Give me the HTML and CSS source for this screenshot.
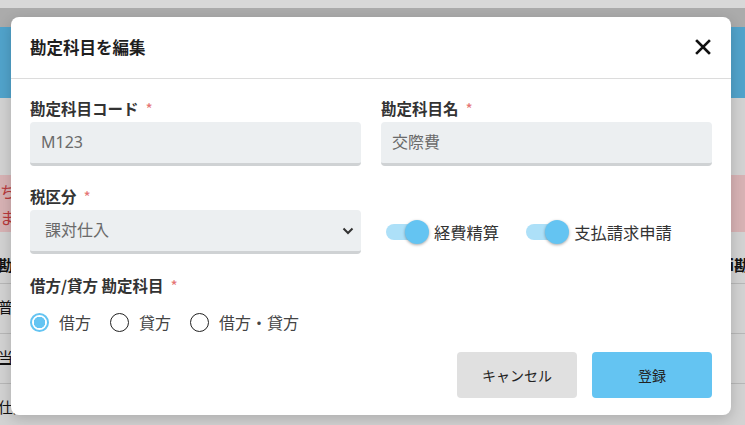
FILE: index.html
```html
<!DOCTYPE html>
<html lang="ja">
<head>
<meta charset="utf-8">
<link rel="stylesheet" href="styles.css">
</head>
<body>
<div class="page">
  <div class="topstrip"></div>
  <div class="appbar"></div>
  <div class="blueband"></div>
  <div class="content">
    <div class="alert"><div>ちょっと</div><div>まだ</div></div>
    <div class="thead"><span class="lt">勘定</span><span class="rt">i勘定</span></div>
    <div class="trow"><span class="lt">普通</span></div>
    <div class="trow"><span class="lt ul">当座</span></div>
    <div class="trow"><span class="lt">仕入</span></div>
  </div>
</div>

<div class="modal">
  <div class="modal-header">
    <h2 class="title">勘定科目を編集</h2>
    <svg class="close" width="16" height="16" viewBox="0 0 16 16"><path d="M2 2 L14 14 M14 2 L2 14" stroke="#111" stroke-width="2.6" stroke-linecap="square"/></svg>
  </div>
  <div class="modal-body">
    <div class="grid">
      <div class="field">
        <div class="label">勘定科目コード<span class="req">*</span></div>
        <div class="input">M123</div>
      </div>
      <div class="field">
        <div class="label">勘定科目名<span class="req">*</span></div>
        <div class="input">交際費</div>
      </div>
      <div class="field row2">
        <div class="label">税区分<span class="req">*</span></div>
        <div class="input select"><span>課対仕入</span>
          <svg width="12" height="8" viewBox="0 0 12 8"><path d="M1.5 1.5 L6 6 L10.5 1.5" fill="none" stroke="#333" stroke-width="2"/></svg>
        </div>
      </div>
      <div class="toggles">
        <div class="toggle"><span class="track"><span class="thumb"></span></span><span class="tlabel">経費精算</span></div>
        <div class="toggle"><span class="track"><span class="thumb"></span></span><span class="tlabel">支払請求申請</span></div>
      </div>
    </div>
    <div class="label l3">借方/貸方 勘定科目<span class="req">*</span></div>
    <div class="radios">
      <div class="radio"><span class="circle on"></span>借方</div>
      <div class="radio"><span class="circle"></span>貸方</div>
      <div class="radio"><span class="circle"></span>借方・貸方</div>
    </div>
    <div class="footer">
      <button class="btn cancel">キャンセル</button>
      <button class="btn primary">登録</button>
    </div>
  </div>
</div>
</body>
</html>
```
FILE: styles.css
```css
* { box-sizing: border-box; }
html, body { margin: 0; padding: 0; }
body {
  width: 745px; height: 425px; overflow: hidden; position: relative;
  font-family: "Noto Sans CJK JP", "Noto Sans", sans-serif;
  background: #d2d2d2;
}
.page { width: 745px; height: 425px; }
.topstrip { height: 8px; background: #d8d8d8; }
.appbar { height: 19px; background: #ababab; }
.blueband { height: 71px; background: #51a3cb; }
.content { position: relative; }
.alert {
  margin-top: 77px; height: 57px; background: #d7b2b4; color: #b8383c;
  font-size: 16px; line-height: 26px; padding-top: 3px;
}
.thead, .trow {
  display: flex; justify-content: space-between; height: 50px;
  border-bottom: 1px solid #b7b7b7; font-size: 15px; color: #111;
}
.thead { height: 52px; align-items: flex-end; padding-bottom: 8px; font-weight: bold; }
.trow { align-items: center; padding-bottom: 4px; }
.lt { margin-left: -2px; }
.ul { text-decoration: underline; }
.rt { margin-right: -19px; }

.modal {
  position: absolute; left: 11px; top: 17px; width: 720px; height: 398px;
  background: #fff; border-radius: 8px;
  box-shadow: 0 4px 14px rgba(0,0,0,0.18);
}
.modal-header {
  height: 62px; border-bottom: 1px solid #dcdcdc;
  display: flex; align-items: center; justify-content: space-between;
  padding: 0 20px 2px 19px;
}
.title { margin: 0; font-size: 16.5px; font-weight: bold; color: #1f1f1f; }
.close { display: block; }
.modal-body { padding: 19px 19px 0 19px; }
.grid { display: grid; grid-template-columns: 331px 331px; column-gap: 20px; row-gap: 20px; }
.label {
  font-size: 15.5px; font-weight: bold; color: #333; line-height: 20px; margin-bottom: 4px;
}
.req { color: #e57373; font-weight: normal; margin-left: 7px; }
.input {
  height: 44px; background: #eceff1; border-radius: 4px;
  border-bottom: 3px solid #cfd2d4;
  font-family: "Noto Sans", "Noto Sans CJK JP", sans-serif;
  font-size: 16px; color: #6a6a6a; line-height: 41px; padding: 0 11px;
}
.select { display: flex; justify-content: space-between; align-items: center; padding: 0 7px 0 15px; }
.select span { line-height: 41px; }
.toggles { display: flex; align-items: flex-end; padding-left: 5px; gap: 27px; }
.toggle { display: flex; align-items: center; height: 44px; }
.track {
  position: relative; width: 34px; height: 16px; border-radius: 8px; background: #ade0f8;
}
.thumb {
  position: absolute; left: 19px; top: -4px; width: 24px; height: 24px; border-radius: 50%;
  background: #64c4f2; box-shadow: 0 1px 3px rgba(0,0,0,0.35);
}
.tlabel { margin-left: 14px; font-size: 16.3px; color: #333; }
.l3 { margin-top: 21px; }
.radios { display: flex; margin-top: 17px; gap: 19px; }
.radio { display: flex; align-items: center; font-size: 16px; color: #444; height: 20px; }
.circle {
  width: 19px; height: 19px; border-radius: 50%; border: 1.5px solid #222;
  margin-right: 10px; box-sizing: border-box; display: inline-block;
}
.circle.on { border: 2px solid #64c4f2; background: radial-gradient(circle, #64c4f2 0 5.5px, #fff 6px); }
.footer { display: flex; justify-content: flex-end; gap: 15px; margin-top: 20px; padding-right: 0; }
.btn {
  width: 120px; height: 46px; border: 0; border-radius: 4px;
  font-family: "Noto Sans CJK JP", sans-serif; font-size: 14px; color: #222;
}
.cancel { background: #e0e0e0; }
.primary { background: #64c4f2; }
```
